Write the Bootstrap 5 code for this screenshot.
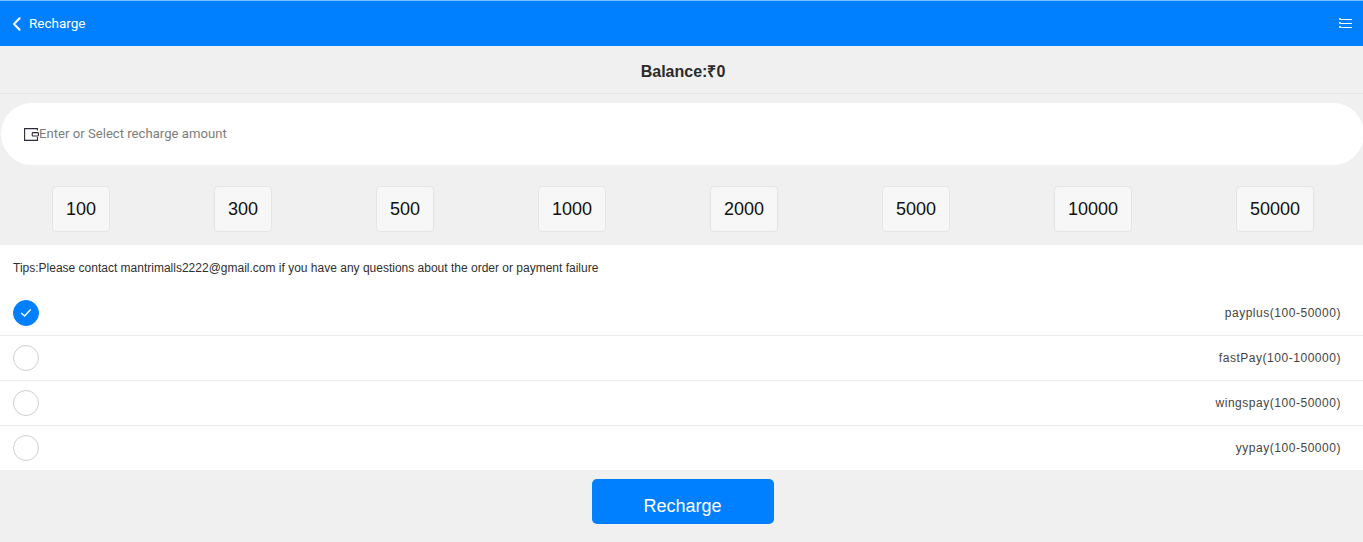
<!DOCTYPE html>
<html lang="en">
<head>
<meta charset="utf-8">
<title>Recharge</title>
<link href="https://cdn.jsdelivr.net/npm/bootstrap@5.3.0/dist/css/bootstrap.min.css" rel="stylesheet">
<style>
html,body{height:542px;overflow:hidden}
body{background:#f0f0f0;font-family:"Liberation Sans",Arial,sans-serif;color:#333}
.top-bar{height:46px;background:#007fff;border-top:1px solid #7cc0ff;padding:0 11px 0 12px;color:#fff;font-family:Roboto,sans-serif;font-size:13.5px;font-weight:400}
.top-title{margin-left:8px}
.balance-row{height:48px;border-bottom:1px solid #e6e6e6;font-size:16px;font-weight:700;color:#2b2b2b;padding:4px 0 0 3px}
.amount-input{height:62px;margin:9px -1px 0 1px;border-radius:31px;background:#fff;padding-left:23px;font-family:Roboto,sans-serif;font-size:13.15px;color:#7d7d7d}
.amount-row{height:80px;margin-right:-3px;padding:21px 0 13px}
.amount-btn{height:46px;padding:0 13px;background:#f7f7f7;border:1px solid #e5e5e5;border-radius:4px;font-size:18px;color:#111}
.pay-panel{background:#fff;height:225px}
.tips{height:46px;padding:14px 13px 0;font-size:12px;color:#2f2f2f}
.pay-row{height:45px;padding:0 22px 0 13px;border-bottom:1px solid #ebebeb;font-size:12px;letter-spacing:.53px;color:#444}
.pay-row:last-child{height:44px;border-bottom:0}
.radio-dot{width:26px;height:26px;border-radius:50%;border:1px solid #cfcfcf;background:#fff}
.radio-dot.on{background:#007fff;border-color:#007fff}
.submit-wrap{padding:9px 0 0 2px}
.submit-btn{width:182px;height:45px;padding:10px 0 0;background:#007fff;border:0;border-radius:5px;color:#fff;font-size:18px}
</style>
</head>
<body>
<header class="top-bar d-flex align-items-center justify-content-between">
  <div class="d-flex align-items-center">
    <svg width="9" height="14" viewBox="0 0 9 14" fill="none" stroke="#fff" stroke-width="2" stroke-linecap="round" stroke-linejoin="round"><path d="M7.6 1.2 2 7l5.6 5.8"/></svg>
    <span class="top-title">Recharge</span>
  </div>
  <svg width="13" height="11" viewBox="0 0 13 11" fill="#fff"><rect x="0" y="0" width="2" height="2" opacity=".8"/><rect x="0" y="4" width="2" height="2" opacity=".8"/><rect x="0" y="8" width="2" height="2" opacity=".8"/><rect x="2" y="1" width="11" height="1"/><rect x="2" y="5" width="11" height="1"/><rect x="2" y="9" width="11" height="1"/></svg>
</header>
<div class="balance-row d-flex align-items-center justify-content-center">Balance:₹0</div>
<div class="amount-input d-flex align-items-center">
  <svg width="15" height="13" viewBox="0 0 15 13" fill="none" stroke="#2d2a3a" stroke-width="1.1"><path d="M13.4 2.6V.6H.6v11.8h12.8V9"/><rect x="8.2" y="4.6" width="6.2" height="3.4" rx=".8"/></svg>
  <span>Enter or Select recharge amount</span>
</div>
<div class="amount-row d-flex align-items-center justify-content-around">
  <div class="amount-btn d-flex align-items-center">100</div>
  <div class="amount-btn d-flex align-items-center">300</div>
  <div class="amount-btn d-flex align-items-center">500</div>
  <div class="amount-btn d-flex align-items-center">1000</div>
  <div class="amount-btn d-flex align-items-center">2000</div>
  <div class="amount-btn d-flex align-items-center">5000</div>
  <div class="amount-btn d-flex align-items-center">10000</div>
  <div class="amount-btn d-flex align-items-center">50000</div>
</div>
<section class="pay-panel">
  <div class="tips">Tips:Please contact mantrimalls2222@gmail.com if you have any questions about the order or payment failure</div>
  <div>
    <div class="pay-row d-flex align-items-center justify-content-between">
      <span class="radio-dot on d-flex align-items-center justify-content-center"><svg width="12" height="10" viewBox="0 0 12 10" fill="none" stroke="#fff" stroke-width="1.3" stroke-linecap="round" stroke-linejoin="round"><path d="M1.5 5.2 4.6 8l5.8-6.2"/></svg></span>
      <span>payplus(100-50000)</span>
    </div>
    <div class="pay-row d-flex align-items-center justify-content-between"><span class="radio-dot"></span><span>fastPay(100-100000)</span></div>
    <div class="pay-row d-flex align-items-center justify-content-between"><span class="radio-dot"></span><span>wingspay(100-50000)</span></div>
    <div class="pay-row d-flex align-items-center justify-content-between"><span class="radio-dot"></span><span>yypay(100-50000)</span></div>
  </div>
</section>
<div class="submit-wrap d-flex justify-content-center">
  <button type="button" class="btn submit-btn">Recharge</button>
</div>
<script src="https://cdn.jsdelivr.net/npm/bootstrap@5.3.0/dist/js/bootstrap.bundle.min.js"></script>
</body>
</html>
